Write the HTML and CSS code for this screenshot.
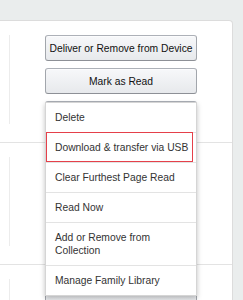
FILE: index.html
```html
<!DOCTYPE html>
<html lang="en">
<head>
    <meta charset="UTF-8">
    <meta name="viewport" content="width=device-width, initial-scale=1.0">
    <title>Manage Your Content</title>
    <link rel="stylesheet" href="styles.css">
</head>
<body>
    <div class="page">
        <div class="card">
            <div class="row">
                <div class="cell-left"></div>
                <div class="actions">
                    <button class="btn">Deliver or Remove from Device</button>
                    <button class="btn">Mark as Read</button>
                    <button class="btn">More actions</button>
                    <ul class="menu">
                        <li>Delete</li>
                        <li class="marked">Download &amp; transfer via USB</li>
                        <li>Clear Furthest Page Read</li>
                        <li>Read Now</li>
                        <li>Add or Remove from Collection</li>
                        <li>Manage Family Library</li>
                    </ul>
                </div>
            </div>
            <div class="row">
                <div class="cell-left"></div>
                <div class="actions">
                    <button class="btn">Deliver or Remove from Device</button>
                    <button class="btn">Mark as Read</button>
                    <button class="btn">More actions</button>
                </div>
            </div>
            <div class="row">
                <div class="cell-left"></div>
                <div class="actions">
                    <button class="btn">Deliver or Remove from Device</button>
                    <button class="btn">Mark as Read</button>
                </div>
            </div>
        </div>
    </div>
</body>
</html>
```

FILE: styles.css
```css
body {
    margin: 0;
    padding: 0;
    background-color: #eaeded;
    font-family: "Liberation Sans", Arial, sans-serif;
}
.page {
    height: 300px;
    overflow: hidden;
    padding: 20px 10px 0 0;
    box-sizing: border-box;
}
.card {
    background: white;
    border: 1px solid #dcdcdc;
    border-left: none;
    border-radius: 0 4px 0 0;
}
.row {
    display: flex;
    border-bottom: 1px solid #e3e3e3;
}
.cell-left {
    width: 9px;
    border-right: 1px solid #ececec;
    margin: 14px 0 18px;
}
.actions {
    position: relative;
    margin-left: 35px;
    padding: 14px 0 15px;
    display: flex;
    flex-direction: column;
    gap: 7px;
}
.btn {
    width: 152px;
    height: 26px;
    padding: 0;
    white-space: nowrap;
    font-family: inherit;
    font-size: 10.3px;
    color: #111;
    background: linear-gradient(#f7f8fa, #e7e9ec);
    border: 1px solid;
    border-color: #adb1b8 #a2a6ac #8d9096;
    border-radius: 3px;
    box-shadow: inset 0 1px 0 rgba(255, 255, 255, 0.6);
    cursor: pointer;
}
.menu {
    position: absolute;
    top: 81px;
    left: 0;
    width: 152px;
    box-sizing: border-box;
    margin: 0;
    padding: 0;
    list-style: none;
    background: white;
    border: 1px solid #d5d5d5;
    box-shadow: 0 2px 5px rgba(0, 0, 0, 0.25);
    z-index: 2;
}
.menu li {
    position: relative;
    padding: 8px 6px 8px 9px;
    font-size: 10.3px;
    line-height: 13px;
    color: #333;
    border-bottom: 1px solid #e3e3e3;
}
.menu li:last-child {
    border-bottom: none;
}
.menu li.marked::after {
    content: "";
    position: absolute;
    left: 0;
    right: 3px;
    top: -1px;
    bottom: 0;
    border: 1px solid #e5404a;
}
```
